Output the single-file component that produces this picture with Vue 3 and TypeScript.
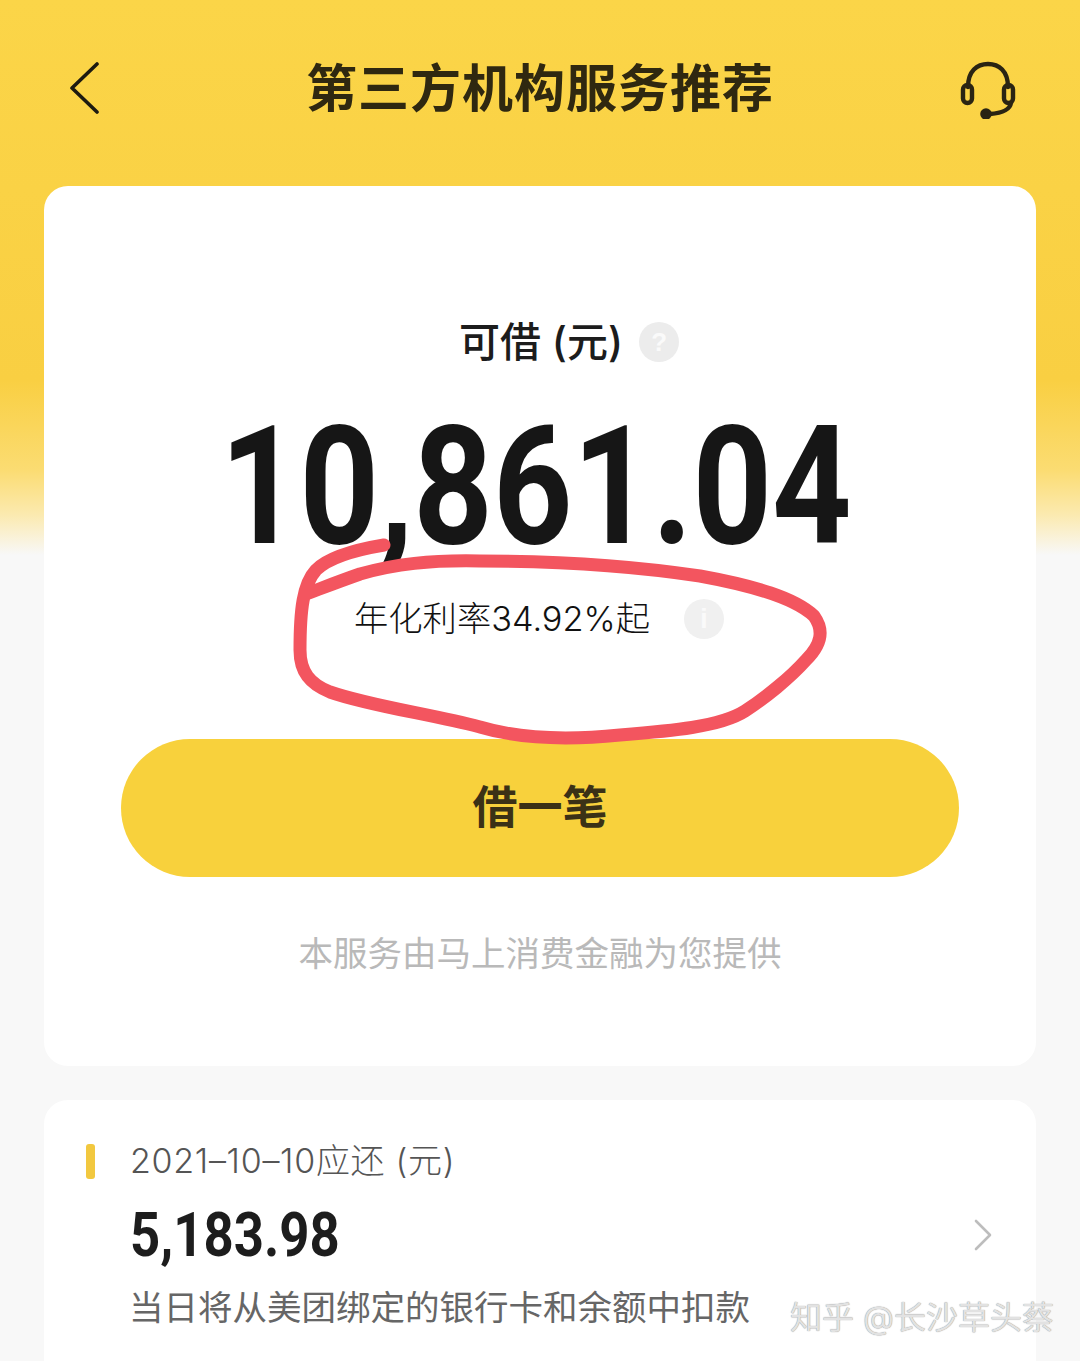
<script setup lang="ts">
interface Bill {
  date: string
  amount: string
  note: string
}

const title = '第三方机构服务推荐'
const limit = '10,861.04'
const rate = '年化利率34.92%起'

const bill: Bill = {
  date: '2021–10–10应还',
  amount: '5,183.98',
  note: '当日将从美团绑定的银行卡和余额中扣款'
}
</script>

<template>
  <div class="page">
    <header class="nav">
      <svg class="nav__back" width="32" height="52" viewBox="0 0 32 52" fill="none">
        <path d="M29 2 L4 26 L29 50" stroke="#1d1a10" stroke-width="3.6" stroke-linecap="round" stroke-linejoin="round" />
      </svg>
      <h1 class="nav__title">{{ title }}</h1>
      <svg class="nav__service" width="56" height="58" viewBox="0 0 56 58" fill="none" stroke="#2a2413" stroke-width="4.4" stroke-linecap="round">
        <path d="M8 26 C8 10 17 3 28 3 C39 3 48 10 48 26" />
        <rect x="3" y="24" width="9" height="18" rx="4.5" />
        <rect x="44" y="24" width="9" height="18" rx="4.5" />
        <path d="M51 42 C50 48 44 52 30 53" />
        <circle cx="26" cy="53" r="3.6" fill="#2a2413" />
      </svg>
    </header>

    <main class="cards">
      <section class="card card--loan">
        <div class="loan__label">
          <span>可借 (元)</span>
          <span class="hint hint--label">?</span>
        </div>
        <div class="loan__amount">{{ limit }}</div>
        <div class="loan__rate">
          <span>{{ rate }}</span>
          <span class="hint hint--rate">i</span>
        </div>
        <button class="loan__btn" type="button">借一笔</button>
        <p class="loan__notice">本服务由马上消费金融为您提供</p>
      </section>

      <section class="card card--bill">
        <div class="bill__date">
          <i class="bill__bar"></i>
          <span>{{ bill.date }} (元)</span>
        </div>
        <div class="bill__row">
          <div class="bill__amount">{{ bill.amount }}</div>
          <svg class="bill__arrow" width="18" height="32" viewBox="0 0 18 32" fill="none">
            <path d="M2 2 L16 16 L2 30" stroke="#bdbdbd" stroke-width="2.6" stroke-linecap="round" stroke-linejoin="round" />
          </svg>
        </div>
        <p class="bill__note">{{ bill.note }}</p>
      </section>
    </main>

    <!-- hand-drawn marker ring around the rate -->
    <svg class="marker" width="1080" height="1361" viewBox="0 0 1080 1361" fill="none">
      <path
        d="M384 545 C360 549 330 556 316 570 C303 584 300 610 300 650 C300 672 310 684 330 692 C370 706 430 714 480 727 C520 739 570 740 620 735 C670 731 720 727 745 711 C765 698 790 678 806 660 C822 644 824 630 814 616 C795 598 755 586 700 576 C640 567 560 561 480 561 C430 560 395 564 360 574 C340 581 322 588 306 594"
        stroke="#f3555f"
        stroke-width="13"
        stroke-linecap="round"
        stroke-linejoin="round"
      />
    </svg>

    <div class="watermark">知乎 @长沙草头蔡</div>
  </div>
</template>

<style>
html,
body {
  margin: 0;
  background: #f8f8f8;
}
</style>

<style scoped>
.page {
  position: relative;
  width: 1080px;
  height: 1361px;
  overflow: hidden;
  font-family: "Inter", "Noto Sans CJK SC", "Liberation Sans", sans-serif;
  background: linear-gradient(180deg, #fbd548 0, #f9cf42 380px, #fbdc72 470px, #fbeab0 515px, #f8f8f8 555px);
}

.nav {
  height: 186px;
  box-sizing: border-box;
  padding: 62px 64px 0 68px;
  display: flex;
  justify-content: space-between;
  align-items: flex-start;
}

.nav__back {
  display: block;
}

.nav__title {
  margin: -7px 0 0 20px;
  font-size: 51px;
  line-height: 68px;
  font-weight: 700;
  letter-spacing: 1px;
  color: #2f2810;
}

.nav__service {
  display: block;
  margin-top: -1px;
}

.cards {
  padding: 0 44px;
  display: flex;
  flex-direction: column;
  gap: 34px;
}

.card {
  background: #fff;
  border-radius: 24px;
}

.card--loan {
  height: 880px;
  box-sizing: border-box;
  padding-top: 131px;
  display: flex;
  flex-direction: column;
  align-items: center;
}

.loan__label {
  display: flex;
  align-items: center;
  gap: 16px;
  margin-left: 58px;
  font-size: 41px;
  line-height: 50px;
  font-weight: 500;
  color: #1c1c1c;
}

.hint {
  display: inline-flex;
  align-items: center;
  justify-content: center;
  width: 40px;
  height: 40px;
  border-radius: 50%;
  background: #ececec;
  font-family: "Liberation Sans", sans-serif;
  font-weight: 700;
  color: #fafafa;
}

.hint--label {
  font-size: 26px;
}

.hint--rate {
  font-size: 28px;
  background: #f0f0f0;
}

/* no narrow bold face around, so the digits get squeezed horizontally */
.loan__amount {
  margin: 35px 0 0 -8px;
  font-family: "Roboto", sans-serif;
  font-size: 166px;
  line-height: 170px;
  font-weight: 700;
  color: #161616;
  transform: scaleX(0.836);
}

.loan__rate {
  align-self: flex-start;
  margin: 22px 0 0 310px;
  display: flex;
  align-items: center;
  gap: 34px;
  font-size: 34.3px;
  line-height: 50px;
  font-weight: 300;
  color: #111;
}

.loan__btn {
  margin-top: 95px;
  width: 838px;
  height: 138px;
  padding: 0 0 8px;
  border: none;
  border-radius: 69px;
  background: #f8d13c;
  font-family: inherit;
  font-size: 45px;
  font-weight: 700;
  color: #3b3116;
}

.loan__notice {
  margin: 53px 0 0;
  font-size: 34.5px;
  line-height: 48px;
  color: #b9b9b9;
}

.card--bill {
  height: 300px;
  box-sizing: border-box;
  padding: 36px 42px 0;
}

.bill__date {
  display: flex;
  align-items: center;
  gap: 35px;
  font-size: 34px;
  line-height: 50px;
  font-weight: 300;
  letter-spacing: 0.7px;
  color: #555;
}

.bill__bar {
  width: 9px;
  height: 35px;
  border-radius: 3px;
  background: #f2c83f;
}

.bill__row {
  display: flex;
  justify-content: space-between;
  align-items: center;
  padding: 0 2px 0 44px;
  height: 70px;
  margin-top: 14px;
}

.bill__amount {
  font-family: "Roboto", sans-serif;
  font-size: 62px;
  line-height: 70px;
  font-weight: 700;
  color: #1d1d1d;
  transform: scaleX(0.85);
  transform-origin: left center;
}

.bill__note {
  margin: 14px 0 0 43px;
  font-size: 34.5px;
  line-height: 48px;
  color: #666;
  white-space: nowrap;
}

.marker {
  position: absolute;
  left: 0;
  top: 0;
  pointer-events: none;
}

.watermark {
  position: absolute;
  left: 790px;
  top: 1297px;
  font-size: 32px;
  line-height: 42px;
  white-space: nowrap;
  color: #e2e2e2;
  text-shadow: 0 0 1px #777;
}
</style>
